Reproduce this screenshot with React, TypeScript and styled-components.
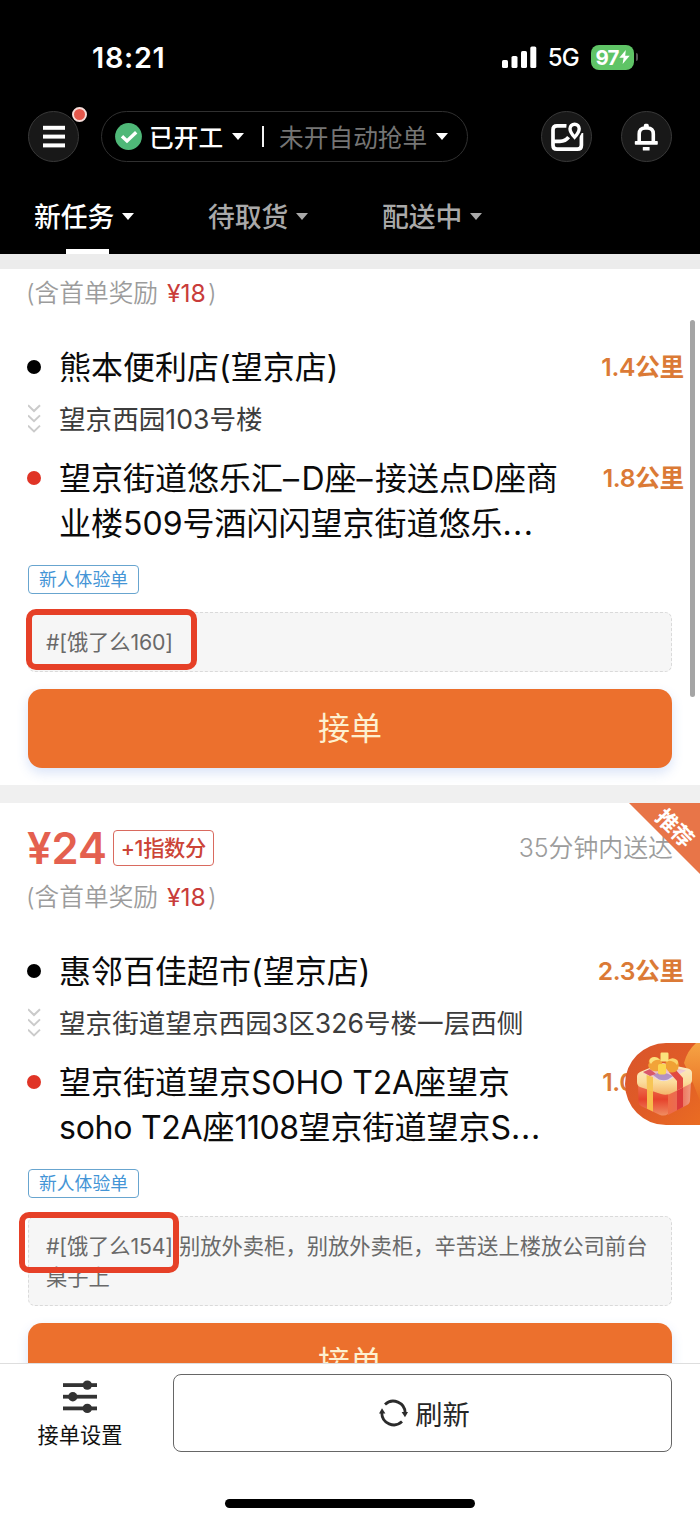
import React from "react";
import styled, { createGlobalStyle } from "styled-components";

const GlobalStyle = createGlobalStyle`
  * { box-sizing: border-box; }
  html, body { margin: 0; padding: 0; background: #fff; }
  body { font-family: Inter, "Noto Sans CJK SC", sans-serif; overflow: hidden; }
  button { font-family: inherit; padding: 0; margin: 0; }
  svg { display: block; flex: none; }
`;

const Screen = styled.div`
  width: 700px;
  height: 1522px;
  display: flex;
  flex-direction: column;
  position: relative;
  overflow: hidden;
  background: #fff;
`;

/* ---------- header ---------- */

const Header = styled.header`
  height: 254px;
  flex: none;
  background: #000;
  color: #fff;
  display: flex;
  flex-direction: column;
`;

const StatusBar = styled.div`
  height: 111px;
  padding: 3px 62px 0 92px;
  display: flex;
  align-items: center;
  justify-content: space-between;
`;

const Clock = styled.span`
  font-size: 28.8px;
  font-weight: 600;
  letter-spacing: 0.7px;
`;

const StatusIcons = styled.div`
  display: flex;
  align-items: center;
`;

const Network = styled.span`
  font-size: 24px;
  font-weight: 500;
  letter-spacing: -0.8px;
  margin: 0 12px 0 11px;
`;

const Battery = styled.span`
  width: 43px;
  height: 25px;
  border-radius: 8px;
  background: #5fc466;
  display: flex;
  align-items: center;
  justify-content: center;
  font-size: 20.5px;
  font-weight: 700;
  letter-spacing: -0.8px;
`;

const BatteryNub = styled.span`
  width: 2px;
  height: 8px;
  margin-left: 2px;
  border-radius: 0 2px 2px 0;
  background: #555;
`;

const Toolbar = styled.div`
  height: 51px;
  padding: 0 28px;
  display: flex;
  align-items: center;
`;

const ToolbarActions = styled.div`
  display: flex;
  gap: 28.5px;
`;

const RoundButton = styled.div`
  position: relative;
  width: 51px;
  height: 51px;
  flex: none;
  border-radius: 50%;
  border: 1.5px solid #393939;
  background: #181818;
  display: flex;
  align-items: center;
  justify-content: center;
`;

const UnreadDot = styled.span`
  position: absolute;
  right: -9px;
  top: -5px;
  width: 15px;
  height: 15px;
  border-radius: 50%;
  background: #e4574b;
  border: 2px solid #f6dcd8;
`;

const StatePill = styled.div`
  width: 367px;
  height: 51px;
  margin: 0 73px 0 22px;
  padding-left: 13px;
  border: 1.5px solid #303030;
  border-radius: 26px;
  display: flex;
  align-items: center;
`;

const PillText = styled.span<{ $dim?: boolean }>`
  font-size: 24.7px;
  line-height: 36px;
  margin: 2px 0 0 ${(p) => (p.$dim ? 0 : 7)}px;
  font-weight: ${(p) => (p.$dim ? 400 : 500)};
  color: ${(p) => (p.$dim ? "#757575" : "#fff")};
  white-space: nowrap;
`;

const PillDivider = styled.span`
  width: 2px;
  height: 21px;
  margin: 0 15px 0 18px;
  background: #f2f2f2;
`;

const Caret = styled.span<{ $color?: string; $gap: number }>`
  width: 0;
  height: 0;
  margin-left: ${(p) => p.$gap}px;
  border-left: 6.5px solid transparent;
  border-right: 6.5px solid transparent;
  border-top: 7.5px solid ${(p) => p.$color ?? "#fff"};
`;

const Tabs = styled.nav`
  flex: 1;
  display: flex;
  padding-left: 34px;
`;

const Tab = styled.div<{ $active?: boolean }>`
  position: relative;
  width: 174px;
  height: 92px;
  padding-bottom: 17px;
  padding-top: 34px;
  display: flex;
  align-items: center;
  font-size: 26.8px;
  line-height: 40px;
  font-weight: 500;
  color: ${(p) => (p.$active ? "#fff" : "#a9a9a9")};
`;

const TabMark = styled.span`
  position: absolute;
  left: 32px;
  bottom: 0;
  width: 43px;
  height: 5px;
  background: #fff;
`;

/* ---------- task list ---------- */

const List = styled.main`
  flex: 1;
  min-height: 0;
  overflow: hidden;
  position: relative;
`;

const Separator = styled.div<{ $h: number; $color: string }>`
  height: ${(p) => p.$h}px;
  flex: none;
  background: ${(p) => p.$color};
`;

const Card = styled.article<{ $h: number; $top: number }>`
  position: relative;
  height: ${(p) => p.$h}px;
  padding: ${(p) => p.$top}px 28px 0;
  background: #fff;
  overflow: hidden;
`;

const PriceRow = styled.div`
  height: 44px;
  margin-bottom: 9px;
  display: flex;
  align-items: center;
`;

const Price = styled.span`
  font-size: 43.5px;
  line-height: 44px;
  font-weight: 600;
  letter-spacing: 0;
  color: #e4604f;
  margin-left: -1px;
`;

const ScoreBadge = styled.span`
  width: 101px;
  height: 36px;
  margin-left: 6px;
  border: 1.5px solid #d96a5f;
  border-radius: 4px;
  color: #cc4437;
  font-size: 21.3px;
  font-weight: 500;
  line-height: 34px;
  text-align: center;
  letter-spacing: -0.3px;
  white-space: nowrap;
`;

const Deadline = styled.span`
  margin-left: auto;
  font-size: 24.9px;
  line-height: 36px;
  color: #9c9c9c;
  font-weight: 350;
  margin-right: -1px;
`;

const Reward = styled.div`
  height: 36px;
  line-height: 36px;
  font-size: 24.7px;
  font-weight: 350;
  color: #9c9c9c;
  margin-left: -2px;
  white-space: pre;
`;

const RewardSum = styled.span`
  color: #c93c3a;
  font-weight: 400;
  margin: 0 2px 0 2px;
`;

const Stop = styled.div<{ $h: number; $mt?: number }>`
  height: ${(p) => p.$h}px;
  margin-top: ${(p) => p.$mt ?? 0}px;
  margin-right: -12px;
  display: flex;
  align-items: flex-start;
`;

const Marker = styled.span<{ $h: number }>`
  width: 31px;
  height: ${(p) => p.$h}px;
  flex: none;
  display: flex;
  align-items: center;
`;

const Dot = styled.span<{ $color: string }>`
  width: 14px;
  height: 14px;
  margin-left: -1px;
  border-radius: 50%;
  background: ${(p) => p.$color};
`;

const Place = styled.div`
  margin-top: 1px;
  font-size: 32px;
  line-height: 44.5px;
  font-weight: 400;
  color: #0b0b0b;
  white-space: nowrap;
`;

const Address = styled.div`
  font-size: 26.6px;
  line-height: 40px;
  font-weight: 400;
  color: #3c3c3c;
  white-space: nowrap;
`;

const Track = styled.span<{ $v: number }>`
  letter-spacing: ${(p) => p.$v}px;
`;

const Distance = styled.span`
  margin-left: auto;
  font-size: 24.7px;
  line-height: 45px;
  font-weight: 600;
  letter-spacing: -0.3px;
  color: #db7a36;
  white-space: nowrap;
`;

const Tag = styled.div`
  width: 111px;
  height: 29px;
  margin-top: 19.5px;
  border: 1.5px solid #68a5cf;
  border-radius: 4px;
  font-size: 17.8px;
  line-height: 28px;
  text-align: center;
  color: #4495d6;
`;

const Note = styled.div<{ $h: number }>`
  position: relative;
  height: ${(p) => p.$h}px;
  margin: 18px 0 17px;
  padding: 14px 0 0 17px;
  border: 1.5px dashed #dadada;
  border-radius: 7px;
  background: #f6f6f6;
  font-size: 21.3px;
  line-height: 31px;
  color: #696969;
  white-space: nowrap;
`;

const Highlight = styled.span<{ $x: number; $y: number; $w: number; $h: number }>`
  position: absolute;
  left: ${(p) => p.$x}px;
  top: ${(p) => p.$y}px;
  width: ${(p) => p.$w}px;
  height: ${(p) => p.$h}px;
  border: 6px solid #e64027;
  border-radius: 10px;
`;

const AcceptButton = styled.button`
  display: block;
  width: 100%;
  height: 79px;
  border: 0;
  border-radius: 14px;
  background: #ec702d;
  box-shadow: 0 5px 12px rgba(70, 120, 220, 0.2);
  color: #fdf0d0;
  font-size: 32px;
  line-height: 80px;
`;

const Ribbon = styled.div`
  position: absolute;
  right: 0;
  top: 0;
  width: 71px;
  height: 71px;
  background: #e87548;
  clip-path: polygon(0 0, 100% 0, 100% 100%);
`;

const RibbonText = styled.span`
  position: absolute;
  left: 22px;
  top: 10px;
  width: 48px;
  line-height: 30px;
  text-align: center;
  font-size: 21.5px;
  font-weight: 700;
  color: #fff;
  transform: rotate(45deg);
`;

const ScrollThumb = styled.span`
  position: absolute;
  right: 5px;
  top: 51px;
  width: 5px;
  height: 377px;
  border-radius: 3px;
  background: #a5a5a5;
`;

const GiftFloat = styled.div`
  position: absolute;
  right: 0;
  top: 774px;
  width: 75px;
  height: 82px;
`;

/* ---------- footer ---------- */

const Footer = styled.footer`
  height: 159px;
  flex: none;
  border-top: 1.5px solid #dedede;
  background: #fff;
  display: flex;
  flex-direction: column;
  align-items: center;
`;

const FooterRow = styled.div`
  width: 100%;
  height: 88px;
  display: flex;
  align-items: flex-end;
  padding-left: 30px;
`;

const Settings = styled.div`
  width: 100px;
  height: 73px;
  margin-right: 43px;
  display: flex;
  flex-direction: column;
  align-items: center;
  font-size: 21.2px;
  line-height: 32px;
  color: #111;
  gap: 4px;
`;

const RefreshButton = styled.button`
  width: 499px;
  height: 78.5px;
  padding-left: 4px;
  border: 1.5px solid #666;
  border-radius: 8px;
  background: #fff;
  display: flex;
  align-items: center;
  justify-content: center;
  gap: 7px;
  font-size: 27.3px;
  color: #262626;
`;

const HomeBar = styled.div`
  width: 250px;
  height: 9px;
  margin-top: 47px;
  border-radius: 5px;
  background: #000;
`;

/* ---------- icons ---------- */

const SignalIcon = () => (
  <svg width="35" height="23" viewBox="0 0 35 23" fill="#fff">
    <rect x="0" y="14" width="6" height="8" rx="1.6" />
    <rect x="9.5" y="10" width="6" height="12" rx="1.6" />
    <rect x="19" y="5" width="6" height="17" rx="1.6" />
    <rect x="28.3" y="0.5" width="6" height="21.5" rx="1.6" />
  </svg>
);

const BoltIcon = () => (
  <svg width="11" height="14" viewBox="0 0 11 14" fill="#fff">
    <path d="M6.8 0 0.3 7.7H4.6L3.6 14 10.7 5.7H6.2Z" />
  </svg>
);

const MenuIcon = () => (
  <svg width="22" height="23" viewBox="0 0 22 23" fill="#fff">
    <rect y="0.8" width="22" height="4" />
    <rect y="9.6" width="22" height="4" />
    <rect y="18.4" width="22" height="4" />
  </svg>
);

const CheckIcon = () => (
  <svg width="27" height="27" viewBox="0 0 27 27">
    <circle cx="13.5" cy="13.5" r="13.4" fill="#4fb878" />
    <path d="M7 13.3 12 18 21.2 9.3" fill="none" stroke="#fff" strokeWidth="3.4" />
  </svg>
);

const MapIcon = () => (
  <svg width="34" height="30" viewBox="0 0 34 30" fill="none" stroke="#fff" strokeWidth="3.7">
    <path d="M16.5 3.8H7Q3 3.8 3 7.8V23.2Q3 27.2 7 27.2H27.4Q31.4 27.2 31.4 23.2V11" />
    <path d="M3 19.3H10Q15.5 19.3 18.6 15.2" />
    <path
      d="M24.6 15.2C21.6 12 20 9.400 20 6.8A4.6 4.6 0 0 1 29.200 6.8C29.200 9.400 27.600 12 24.6 15.2Z"
      stroke="#181818"
      strokeWidth="7"
    />
    <path d="M24.6 15.2C21.6 12 20 9.400 20 6.800A4.6 4.6 0 0 1 29.200 6.800C29.200 9.400 27.600 12 24.6 15.2Z" strokeWidth="3.400" />
  </svg>
);

const BellIcon = () => (
  <svg width="24" height="28" viewBox="0 0 24 28">
    <path d="M5.200 19V11Q5.200 5 11.200 5H13.300Q19.300 5 19.300 11V19" fill="none" stroke="#fff" strokeWidth="3.600" />
    <rect x="9.800" y="0.800" width="5" height="4" rx="1.600" fill="#fff" />
    <rect x="0.800" y="18" width="23" height="3.800" rx="0.800" fill="#fff" />
    <rect x="8.800" y="24" width="6.800" height="3.600" rx="0.500" fill="#fff" />
  </svg>
);

const ChevronsIcon = () => (
  <svg width="13" height="29" viewBox="0 0 13 29" fill="none" stroke="#cbcbcb" strokeWidth="2">
    <path d="M0 1.2 6 7 12 1.2M0 11.4 6 17.2 12 11.4M0 21.6 6 27.4 12 21.6" />
  </svg>
);

const SlidersIcon = () => (
  <svg width="34" height="36" viewBox="0 0 34 36" fill="#333">
    <rect y="4.2" width="34" height="3.8" />
    <rect y="15.8" width="34" height="3.8" />
    <rect y="27.5" width="34" height="3.8" />
    <circle cx="24.3" cy="6.1" r="4.7" />
    <circle cx="9.8" cy="17.7" r="4.7" />
    <circle cx="24.3" cy="29.400" r="4.7" />
  </svg>
);

const RefreshIcon = () => (
  <svg width="29" height="28" viewBox="0 0 29 28" fill="none" stroke="#2b2b2b" strokeWidth="2.8">
    <path d="M6 5.4A12 12 0 0 1 26.200 14" />
    <path d="M23 22.600A12 12 0 0 1 2.800 14" />
    <path d="M22.600 13H29L26 18.200Z" fill="#2b2b2b" stroke="none" />
    <path d="M0 14.400H6.400L3 9.200Z" fill="#2b2b2b" stroke="none" />
  </svg>
);

const GiftIcon = () => (
  <svg width="75" height="82" viewBox="0 0 75 82">
    <defs>
      <linearGradient id="pill" x1="0" y1="0" x2="1" y2="1">
        <stop offset="0" stopColor="#d9552b" />
        <stop offset="0.55" stopColor="#e05c27" />
        <stop offset="1" stopColor="#ea6c22" />
      </linearGradient>
      <linearGradient id="shine" x1="0" y1="0" x2="0" y2="1">
        <stop offset="0" stopColor="#f6a444" />
        <stop offset="1" stopColor="#e86b22" />
      </linearGradient>
      <linearGradient id="boxLeft" x1="0" y1="0" x2="0" y2="1">
        <stop offset="0" stopColor="#ee7a55" />
        <stop offset="0.5" stopColor="#e6432c" />
        <stop offset="1" stopColor="#f08d62" />
      </linearGradient>
      <linearGradient id="boxRight" x1="0" y1="0" x2="1" y2="0">
        <stop offset="0" stopColor="#ef6c45" />
        <stop offset="0.5" stopColor="#ea6a55" />
        <stop offset="1" stopColor="#f09a80" />
      </linearGradient>
      <linearGradient id="rim" x1="0" y1="0" x2="0" y2="1">
        <stop offset="0" stopColor="#fbeccb" />
        <stop offset="0.6" stopColor="#fbdc9c" />
        <stop offset="1" stopColor="#f3b46a" />
      </linearGradient>
      <linearGradient id="lidTop" x1="0" y1="0" x2="0.4" y2="1">
        <stop offset="0" stopColor="#f0a06a" />
        <stop offset="0.6" stopColor="#eec6cf" />
        <stop offset="1" stopColor="#e9dcef" />
      </linearGradient>
    </defs>
    <path d="M41 0H75V82H41A41 41 0 0 1 41 0Z" fill="url(#pill)" />
    <path d="M75 0H71Q62 8 59 20L68 40L75 58Z" fill="url(#shine)" />
    <path d="M13 40 43 48V71Q40 73.500 35 72L17 63.500Q13.500 62 13.500 58Z" fill="url(#boxLeft)" />
    <path d="M43 48 66 38 65 57Q65 60.500 62 62L43 72Z" fill="url(#boxRight)" />
    <path d="M22 40H28V68.500L22 65.800Z" fill="#f8bd4c" />
    <path d="M52 40 58 38V64L52 67.200Z" fill="#dc3a3a" />
    <path
      d="M15 29 34 21Q38 19.500 42 21L63 25.500Q67 26.500 67 30V37Q67 40 64 41.500L48 49.500Q42 53 36 51L15 44Q12 42.500 12 39V33Q12 30.500 15 29Z"
      fill="url(#rim)"
    />
    <path d="M18 30 37 22 61 27.500 46 36Q41 39 35 37.500Z" fill="url(#lidTop)" />
    <path d="M28 32Q37 27 48 33L43 36.500Q39 38 34 36.500Z" fill="#a07cba" opacity="0.75" />
    <path d="M18 29 25 26 31 31 25 33Z" fill="#d9566a" />
    <path d="M44 29 50 26 58 35V44.500L52 47.500V38Z" fill="#e24a40" />
    <path d="M21.500 32 28 34V48.500L22 46.500Z" fill="#f7c555" />
    <path d="M26 15Q31 12 36 17L38 23 33 28Q28 29 25 26Q22 23 24 20Q23 17 26 15Z" fill="#f2a338" />
    <path d="M52 17Q46 14 41 18L40 24 44 29Q50 31 53 26Q55 20 52 17Z" fill="#f0a134" />
    <path d="M26 15Q31 12 35 17Q29 16 26 21Q23 18 26 15Z" fill="#fbe07d" />
    <path d="M52 17Q47 13 42 18Q48 17 52 22Q54 19 52 17Z" fill="#fad36b" />
    <rect x="35.5" y="9.500" width="8" height="9" rx="1.200" fill="#fbe27d" />
    <rect x="33" y="21" width="8" height="10.500" rx="1.800" fill="#fbd650" />
  </svg>
);

/* ---------- data ---------- */

interface Task {
  height: number;
  top: number;
  price?: string;
  shop: string;
  address: React.ReactNode;
  target: React.ReactNode;
  distances: [string, string];
  note: React.ReactNode;
  noteHeight: number;
  mark: { x: number; y: number; w: number; h: number };
}

const TASKS: Task[] = [
  {
    height: 516,
    top: 6,
    shop: "熊本便利店(望京店)",
    address: "望京西园103号楼",
    target: (
      <>
        望京街道悠乐汇<Track $v={2.4}>–</Track>D座<Track $v={2.4}>–</Track>接送点D座商
        <br />
        业楼509号酒闪闪望京街道悠乐<Track $v={1.4}>...</Track>
      </>
    ),
    distances: ["1.4公里", "1.8公里"],
    note: <Track $v={-0.15}>#[饿了么160]</Track>,
    noteHeight: 60,
    mark: { x: -3, y: -4, w: 171, h: 61 },
  },
  {
    height: 640,
    top: 23,
    price: "¥24",
    shop: "惠邻百佳超市(望京店)",
    address: "望京街道望京西园3区326号楼一层西侧",
    target: (
      <>
        望京街道望京<Track $v={-0.2}>SOHO T2A</Track>座望京
        <br />
        <Track $v={-0.25}>soho T2A</Track>座<Track $v={-0.5}>1108</Track>望京街道望京S
        <Track $v={0.8}>...</Track>
      </>
    ),
    distances: ["2.3公里", "1.0公里"],
    note: (
      <>
        <Track $v={-0.15}>#[饿了么154]</Track> 别放外卖柜，别放外卖柜，辛苦送上楼放公司前台
        <br />
        桌子上
      </>
    ),
    noteHeight: 90,
    mark: { x: -10.5, y: -4.5, w: 160, h: 61 },
  },
];

const TaskCard = ({ task }: { task: Task }) => (
  <Card $h={task.height} $top={task.top}>
    {task.price && (
      <PriceRow>
        <Price>{task.price}</Price>
        <ScoreBadge>+1指数分</ScoreBadge>
        <Deadline>35分钟内送达</Deadline>
      </PriceRow>
    )}
    <Reward>
      (含首单奖励 <RewardSum>¥18</RewardSum>)
    </Reward>
    <Stop $h={45} $mt={34}>
      <Marker $h={44}>
        <Dot $color="#000" />
      </Marker>
      <Place>{task.shop}</Place>
      <Distance>{task.distances[0]}</Distance>
    </Stop>
    <Stop $h={40} $mt={9}>
      <Marker $h={38}>
        <ChevronsIcon />
      </Marker>
      <Address>{task.address}</Address>
    </Stop>
    <Stop $h={89} $mt={17}>
      <Marker $h={44}>
        <Dot $color="#e03426" />
      </Marker>
      <Place>{task.target}</Place>
      <Distance>{task.distances[1]}</Distance>
    </Stop>
    <Tag>新人体验单</Tag>
    <Note $h={task.noteHeight}>
      {task.note}
      <Highlight $x={task.mark.x} $y={task.mark.y} $w={task.mark.w} $h={task.mark.h} />
    </Note>
    <AcceptButton>接单</AcceptButton>
    {task.price && (
      <Ribbon>
        <RibbonText>推荐</RibbonText>
      </Ribbon>
    )}
  </Card>
);

export default function App() {
  return (
    <Screen>
      <GlobalStyle />
      <Header>
        <StatusBar>
          <Clock>18:21</Clock>
          <StatusIcons>
            <SignalIcon />
            <Network>5G</Network>
            <Battery>
              97
              <BoltIcon />
            </Battery>
            <BatteryNub />
          </StatusIcons>
        </StatusBar>
        <Toolbar>
          <RoundButton>
            <MenuIcon />
            <UnreadDot />
          </RoundButton>
          <StatePill>
            <CheckIcon />
            <PillText>已开工</PillText>
            <Caret $gap={9} />
            <PillDivider />
            <PillText $dim>未开自动抢单</PillText>
            <Caret $gap={9} />
          </StatePill>
          <ToolbarActions>
            <RoundButton>
              <MapIcon />
            </RoundButton>
            <RoundButton>
              <BellIcon />
            </RoundButton>
          </ToolbarActions>
        </Toolbar>
        <Tabs>
          <Tab $active>
            新任务
            <Caret $gap={8} />
            <TabMark />
          </Tab>
          <Tab>
            待取货
            <Caret $gap={8} $color="#a9a9a9" />
          </Tab>
          <Tab>
            配送中
            <Caret $gap={8} $color="#a9a9a9" />
          </Tab>
        </Tabs>
      </Header>
      <Separator $h={15} $color="#ececec" />
      <List>
        <TaskCard task={TASKS[0]} />
        <Separator $h={18} $color="#f0f0f0" />
        <TaskCard task={TASKS[1]} />
        <ScrollThumb />
        <GiftFloat>
          <GiftIcon />
        </GiftFloat>
      </List>
      <Footer>
        <FooterRow>
          <Settings>
            <SlidersIcon />
            接单设置
          </Settings>
          <RefreshButton>
            <RefreshIcon />
            刷新
          </RefreshButton>
        </FooterRow>
        <HomeBar />
      </Footer>
    </Screen>
  );
}
